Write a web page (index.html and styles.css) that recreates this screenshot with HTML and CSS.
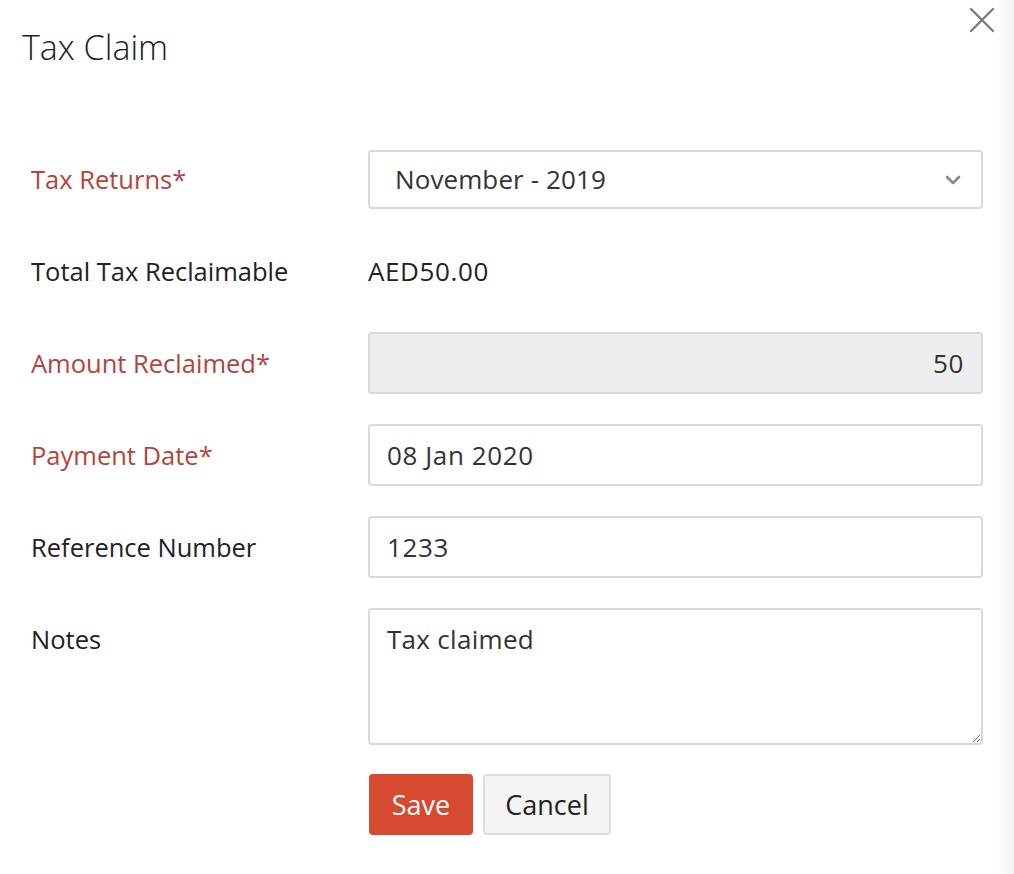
FILE: index.html
```html
<!DOCTYPE html>
<html lang="en">
<head>
<meta charset="utf-8">
<title>Tax Claim</title>
<link rel="stylesheet" href="styles.css">
</head>
<body>
<div class="dialog">
  <header class="dialog-header">
    <h1 class="title">Tax Claim</h1>
    <button class="close" aria-label="Close">
      <svg width="26" height="26" viewBox="0 0 26 26"><path d="M2 2 L24 24 M24 2 L2 24" stroke="#7a7a7a" stroke-width="2.4" stroke-linecap="round"/></svg>
    </button>
  </header>
  <form class="form">
    <div class="row">
      <label class="label required">Tax Returns*</label>
      <div class="field">
        <div class="select">
          <span>November - 2019</span>
          <svg class="chevron" width="16" height="10" viewBox="0 0 16 10"><path d="M2 2 L8 8 L14 2" fill="none" stroke="#8a8a8a" stroke-width="2.6" stroke-linecap="round" stroke-linejoin="round"/></svg>
        </div>
      </div>
    </div>
    <div class="row">
      <label class="label">Total Tax Reclaimable</label>
      <div class="field"><span class="static">AED50.00</span></div>
    </div>
    <div class="row">
      <label class="label required">Amount Reclaimed*</label>
      <div class="field"><input class="input disabled right" value="50" disabled></div>
    </div>
    <div class="row">
      <label class="label required">Payment Date*</label>
      <div class="field"><input class="input" value="08 Jan 2020"></div>
    </div>
    <div class="row">
      <label class="label">Reference Number</label>
      <div class="field"><input class="input" value="1233"></div>
    </div>
    <div class="row row-top">
      <label class="label">Notes</label>
      <div class="field"><textarea class="textarea">Tax claimed</textarea></div>
    </div>
    <div class="actions">
      <button type="button" class="btn btn-primary">Save</button>
      <button type="button" class="btn btn-secondary">Cancel</button>
    </div>
  </form>
</div>
</body>
</html>
```
FILE: styles.css
```css
* { box-sizing: border-box; }
html, body { margin: 0; padding: 0; }
body {
  width: 1014px;
  height: 874px;
  overflow: hidden;
  font-family: "Open Sans", "Lato", sans-serif;
  color: #222;
  background: linear-gradient(to right, #ffffff 997px, #f3f3f3 1014px);
}
.dialog {
  width: 998px;
  padding: 0 15px 0 31px;
}
.dialog-header {
  display: flex;
  justify-content: space-between;
  align-items: flex-start;
  height: 148px;
}
.title {
  margin: 27px 0 0 -9px;
  font-size: 34px;
  font-weight: 300;
  color: #222;
  line-height: 40px;
}
.close {
  margin: 7px -12px 0 0;
  padding: 0;
  border: 0;
  background: none;
  width: 26px;
  height: 26px;
}
.form {
  display: flex;
  flex-direction: column;
  gap: 30px;
}
.row {
  display: grid;
  grid-template-columns: 337px 615px;
  align-items: center;
  min-height: 62px;
}
.row-top { align-items: start; }
.label {
  font-size: 25.5px;
  color: #222;
  line-height: 30px;
}
.row-top .label { padding-top: 16px; }
.label.required { color: #b5443b; }
.select {
  height: 59px;
  border: 2px solid #d6d9dd;
  border-radius: 4px;
  display: flex;
  align-items: center;
  justify-content: space-between;
  padding: 0 20px 0 25px;
  font-size: 26px;
  letter-spacing: 0.1px;
  color: #333;
}
.chevron { margin-top: 2px; }
.static { font-size: 26px; letter-spacing: 0.6px; color: #222; }
.input {
  display: block;
  width: 100%;
  height: 62px;
  border: 2px solid #d6d9dd;
  border-radius: 4px;
  padding: 0 17px;
  font-family: inherit;
  font-size: 26px;
  letter-spacing: 0.6px;
  color: #333;
  background: #fff;
  outline: none;
}
.input.disabled { background: #eeeeee; color: #333; -webkit-text-fill-color: #333; opacity: 1; }
.input.right { text-align: right; }
.textarea {
  display: block;
  width: 100%;
  height: 137px;
  border: 2px solid #d6d9dd;
  border-radius: 4px;
  padding: 14px 17px;
  font-family: inherit;
  font-size: 26px;
  letter-spacing: 0.3px;
  line-height: 30px;
  color: #333;
  resize: vertical;
  outline: none;
}
.actions {
  display: flex;
  gap: 10px;
  margin: -1px 0 0 338px;
}
.btn {
  height: 61px;
  border-radius: 4px;
  font-family: inherit;
  font-size: 27px;
  padding: 0;
}
.btn-primary {
  width: 104px;
  background: #d64a32;
  border: 0;
  color: #fff;
}
.btn-secondary {
  width: 128px;
  background: #f4f4f4;
  border: 2px solid #dddddd;
  color: #222;
}
```
